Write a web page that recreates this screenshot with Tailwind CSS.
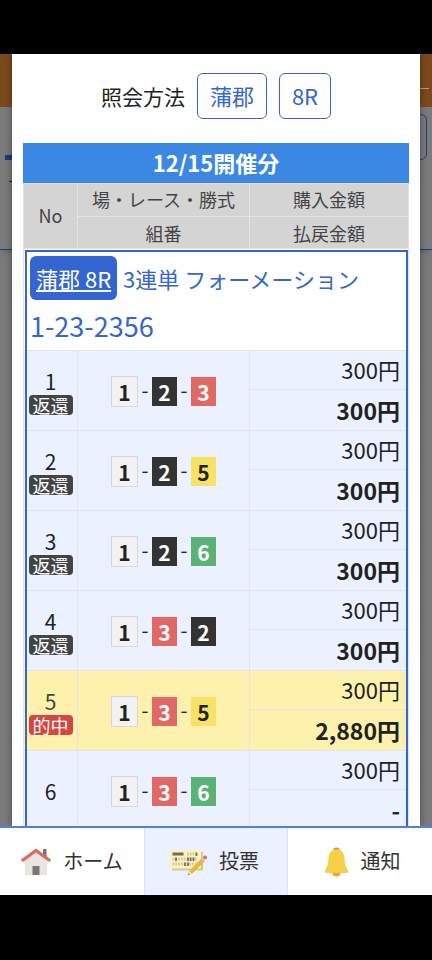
<!DOCTYPE html>
<html lang="ja">
<head>
    <meta charset="UTF-8">
    <meta name="viewport" content="width=device-width, initial-scale=1.0">
    <title>投票照会</title>
    <script src="https://cdn.jsdelivr.net/npm/@tailwindcss/browser@4"></script>
    <style>
        body {
            font-family: "Noto Sans CJK JP", sans-serif;
        }
    </style>
</head>
<body class="bg-black h-screen flex flex-col pt-[54px] pb-[65px] text-[#222] overflow-hidden">

    <main class="relative flex-1 min-h-0 overflow-hidden bg-[#7b7b7b]">

        <!-- Dimmed page behind the dialog -->
        <div class="absolute inset-0" aria-hidden="true">
            <div class="h-[53px] bg-[#7a4a1c]"></div>
            <div class="h-[143px] border-b border-[#1f3d80] shadow-md"></div>
            <div class="absolute right-[3px] top-[34px] w-6 h-px bg-[#b0a090]"></div>
            <div class="absolute right-[5px] top-[60px] w-10 h-[46px] rounded-md border border-[#1f3d80]"></div>
            <div class="absolute left-[5px] top-[101px] w-10 h-[5px] bg-[#1c3a7d]"></div>
            <div class="absolute left-[9px] top-[127px] w-6 h-px bg-[#222]"></div>
        </div>

        <!-- Dialog -->
        <section class="relative mx-3 h-full overflow-hidden bg-white shadow-[0_0_8px_rgba(0,0,0,0.4)]">
            <div class="flex items-center justify-center gap-3 pt-[19px] pb-6">
                <span class="text-[21px] leading-[30px]">照会方法</span>
                <button type="button" class="h-[46px] px-3 pb-[2px] rounded-md border border-[#3366d1] text-[#3366d1] text-[22px] leading-[30px]">蒲郡</button>
                <button type="button" class="h-[46px] px-3 pb-[2px] rounded-md border border-[#3366d1] text-[#3366d1] text-[22px] leading-[30px]">8R</button>
            </div>

            <div class="mx-[11px]">
                <h2 class="h-10 bg-[#3b88e4] text-white text-center text-[22px] leading-[38px] font-bold">12/15開催分</h2>

                <table class="w-full table-fixed border-collapse">
                    <colgroup>
                        <col class="w-[54px]">
                        <col class="w-[172px]">
                        <col>
                    </colgroup>
                    <thead class="bg-[#d4d4d4] text-[#444] text-[18px] leading-6">
                        <tr class="h-[33px]">
                            <th rowspan="2" class="border border-[#e4e4e4] font-normal p-0 pb-[2px]">No</th>
                            <th class="border border-[#e4e4e4] font-normal p-0 pb-[2px]">場・レース・勝式</th>
                            <th class="border border-[#e4e4e4] font-normal p-0 pb-[2px]">購入金額</th>
                        </tr>
                        <tr class="h-8">
                            <th class="border border-[#e4e4e4] font-normal p-0">組番</th>
                            <th class="border border-[#e4e4e4] font-normal p-0">払戻金額</th>
                        </tr>
                    </thead>
                    <tbody id="bets" class="border-x border-[#e4e4e4] outline-2 -outline-offset-3 outline-[#3366d1] bg-[#ebf1fe]">
                        <tr class="h-[102px] bg-white text-[#3366d1]">
                            <td colspan="3" class="p-0 pl-[6px] align-top border-b border-[#e4e4e4]">
                                <div class="flex items-center gap-[6px] pt-[7px] text-[22px] leading-[30px]">
                                    <a href="#" class="h-11 px-[6px] leading-11 rounded-md bg-[#3366d1] text-white underline">蒲郡 8R</a>
                                    <span>3連単 フォーメーション</span>
                                </div>
                                <div class="pt-[6px] text-[27px] leading-10">1-23-2356</div>
                            </td>
                        </tr>
                    </tbody>
                </table>
            </div>
        </section>
    </main>

    <nav class="grid grid-cols-3 h-[69px] shrink-0 bg-white border-t-2 border-[#5080dc] text-[20px] text-[#333]">
        <a href="#" class="flex items-center justify-center gap-3">
            <svg class="w-[30px] h-[28px]" viewBox="0 0 30 28">
                <path d="M22 1h3.500v9H22z" fill="#757575"/>
                <path d="M15 3L26 12v15H4V12z" fill="#e9e6e1"/>
                <path d="M11.500 18h7v9h-7z" fill="#777"/>
                <path d="M2 12L15 2.500l13 9.500" fill="none" stroke="#df6b60" stroke-width="3.400" stroke-linecap="round" stroke-linejoin="miter"/>
            </svg>
            <span class="pb-[2px]">ホーム</span>
        </a>
        <a href="#" class="flex items-center justify-center gap-3 pr-1 bg-[#ebf1fe] border-x border-[#dde1e8]">
            <svg class="w-[38px] h-[28px]" viewBox="0 0 38 28">
                <path d="M3 4h31v18.500H3z" fill="#d6c98e"/>
                <path d="M1 2h31v18.500H1z" fill="#fcf1bf"/>
                <path d="M3.500 4.500h11v3h-11z" fill="#6f6b5c"/>
                <path d="M18 6h10M3.500 11h24M3.500 16h24" stroke="#d5caa0" stroke-width="3" stroke-dasharray="1.800 1"/>
                <path d="M27.500 4.500v3.500M7 9.500v3.500M19 9.500v3.500M21.700 9.500v3.500M24.500 9.500v3.500M16 14.500v3.500M19 14.500v3.500" stroke="#6f6b5c" stroke-width="1.700"/>
                <path d="M21.500 24.500L33.500 12.500" stroke="#e3b83c" stroke-width="4.200"/>
                <path d="M33 13l1.500-1.500" stroke="#bdbdbd" stroke-width="4.200"/>
                <circle cx="36" cy="9.500" r="2" fill="#e56d63"/>
                <path d="M20 23l3 3-4 1z" fill="#ead7ae"/>
                <path d="M20 25.500l-1.500 1.800 2-.6z" fill="#555"/>
            </svg>
            <span class="pb-[2px]">投票</span>
        </a>
        <a href="#" class="flex items-center justify-center gap-3 pl-1">
            <svg class="w-[25px] h-[30px]" viewBox="0 0 25 30">
                <circle cx="12.500" cy="4" r="3.500" fill="#e58a35"/>
                <circle cx="12.500" cy="25" r="4.600" fill="#f2a33e"/>
                <path d="M12.500 2.300C7.500 2.300 4.800 6 4.500 11C4.200 17 3.800 19.500 1.200 23C.2 24.800 1 26 2.600 26H22.400C24 26 24.800 24.800 23.800 23C21.200 19.500 20.800 17 20.500 11C20.200 6 17.500 2.300 12.500 2.300z" fill="#f7cf47"/>
            </svg>
            <span class="pb-[2px]">通知</span>
        </a>
    </nav>

    <script>
        // Boat colors by number
        const boatColors = {
            1: 'w-[27px] h-[31px] border border-[#d6d6d6] bg-[#f2f2f2] text-[#222] leading-[30px]',
            2: 'w-[25px] h-[29px] bg-[#333] text-white leading-[30px]',
            3: 'w-[25px] h-[29px] bg-[#e16965] text-white leading-[30px]',
            5: 'w-[25px] h-[29px] bg-[#f5e267] text-[#222] leading-[30px]',
            6: 'w-[25px] h-[29px] bg-[#5cb176] text-white leading-[30px]'
        };

        const bets = [
            { combo: [1, 2, 3], paid: '300円', back: '300円', status: '返還' },
            { combo: [1, 2, 5], paid: '300円', back: '300円', status: '返還' },
            { combo: [1, 2, 6], paid: '300円', back: '300円', status: '返還' },
            { combo: [1, 3, 2], paid: '300円', back: '300円', status: '返還' },
            { combo: [1, 3, 5], paid: '300円', back: '2,880円', status: '的中' },
            { combo: [1, 3, 6], paid: '300円', back: '-', status: '' }
        ];

        const body = document.getElementById('bets');

        bets.forEach((bet, i) => {
            const hit = bet.status === '的中';
            const rowColor = hit ? 'bg-[#fdf1ad]' : '';
            const tagColor = hit ? 'bg-[#d64541]' : 'bg-[#444]';
            const noColor = hit ? 'text-[#444]' : '';
            const tag = bet.status
                ? `<span class="block w-11 h-5 mx-auto rounded-[4px] ${tagColor} text-white text-[18px] leading-5">${bet.status}</span>`
                : '';
            const boats = bet.combo
                .map(n => `<span class="${boatColors[n]} text-[21px] font-bold text-center">${n}</span>`)
                .join('<span class="w-[14px] pb-1 text-center text-[20px] leading-6">-</span>');

            body.insertAdjacentHTML('beforeend', `
                <tr class="h-[39px] ${rowColor}">
                    <td rowspan="2" class="p-0 border-r border-b border-[#e4e4e4] text-center text-[21px] leading-7 ${noColor}">${i + 1}${tag}</td>
                    <td rowspan="2" class="p-0 pt-[2px] border-r border-b border-[#e4e4e4]">
                        <div class="flex items-center justify-center">${boats}</div>
                    </td>
                    <td class="p-0 pr-2 pb-[2px] border-b border-[#e4e4e4] text-right text-[22px] leading-8">${bet.paid}</td>
                </tr>
                <tr class="h-[41px] ${rowColor}">
                    <td class="p-0 pr-2 border-b border-[#e4e4e4] text-right text-[23px] leading-8 font-bold">${bet.back}</td>
                </tr>`);
        });
    </script>
</body>
</html>
